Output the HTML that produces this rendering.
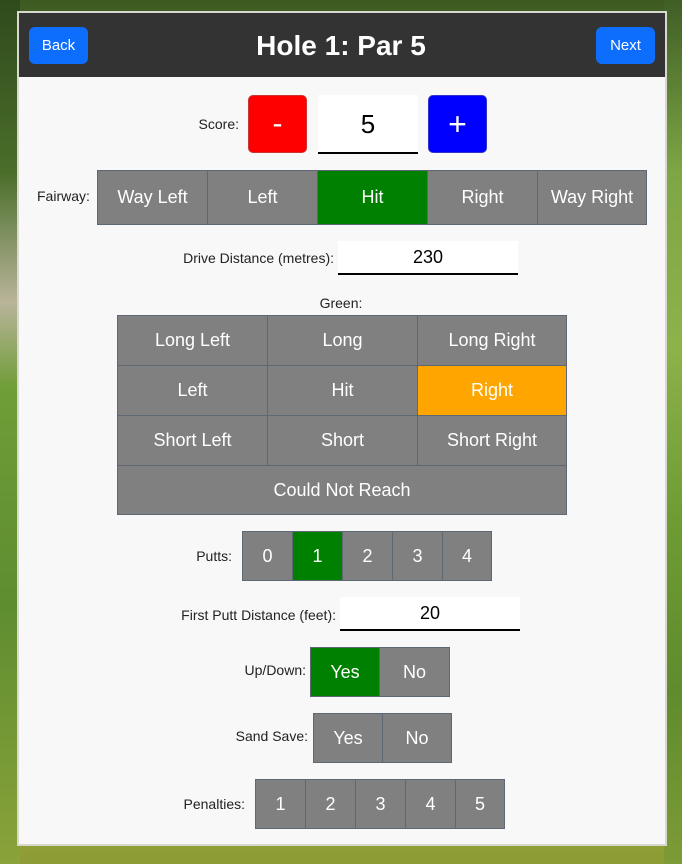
<!DOCTYPE html>
<html><head><meta charset="utf-8"><style>
*{box-sizing:border-box;margin:0;padding:0}
body{width:682px;height:864px;overflow:hidden;position:relative;font-family:"Liberation Sans",sans-serif;
background:linear-gradient(180deg,#3d5a22 0%,#55802e 15%,#6f9a38 30%,#7aa53c 50%,#87a83a 70%,#93a537 90%,#8e9c35 100%);}
.bgl{position:absolute;left:0;top:0;width:20px;height:864px;background:linear-gradient(180deg,#2f4a1c 0%,#4a6e2a 20%,#b9b49a 35%,#6f9d37 45%,#5e8d30 70%,#8aa33a 100%)}
.bgr{position:absolute;right:0;top:0;width:18px;height:864px;background:linear-gradient(180deg,#3e5e25 0%,#7ea645 20%,#8db24a 40%,#6e9c33 60%,#5f8c2d 80%,#7d9b37 100%)}
.card{position:absolute;left:17px;top:11px;width:650px;height:835px;background:#f8f8f8;border:2px solid #d8d8d0}
.hdr{position:absolute;left:19px;top:13px;width:646px;height:64px;background:#333}
.nb{position:absolute;top:27px;height:37px;background:#0d6efd;color:#fff;border-radius:6px;font-size:15px;line-height:37px;text-align:center}
.title{position:absolute;left:0;width:682px;top:27px;text-align:center;color:#fff;font-size:28px;font-weight:bold;line-height:38px}
.lbl{position:absolute;font-size:14px;color:#222;text-align:right;white-space:nowrap}
.b{position:absolute;background:#808080;color:#fff;font-size:18px;text-align:center;border:1px solid #5d6874}
.g{background:#008000}
.o{background:#ffa500}
.inp{position:absolute;background:#fff;border-bottom:2px solid #000;text-align:center;color:#000}
</style></head><body>
<div class="bgl"></div><div class="bgr"></div>
<div class="card"></div>
<div class="hdr"></div>
<div class="nb" style="left:29px;width:59px">Back</div>
<div class="nb" style="left:596px;width:59px">Next</div>
<div class="title">Hole 1: Par 5</div>

<div class="lbl" style="right:443px;top:116px">Score:</div>
<div class="b" style="left:248px;top:95px;width:59px;height:58px;background:#f00;border-color:#c33;border-radius:5px;font-size:30px;line-height:56px">-</div>
<div class="inp" style="left:318px;top:95px;width:100px;height:59px;font-size:26px;line-height:58px">5</div>
<div class="b" style="left:428px;top:95px;width:59px;height:58px;background:#00f;border-color:#33c;border-radius:5px;font-size:32px;line-height:56px">+</div>

<div class="lbl" style="left:37px;top:188px">Fairway:</div>
<div class="b" style="left:97px;top:170px;width:111px;height:55px;line-height:53px">Way Left</div>
<div class="b" style="left:207px;top:170px;width:111px;height:55px;line-height:53px">Left</div>
<div class="b g" style="left:317px;top:170px;width:111px;height:55px;line-height:53px">Hit</div>
<div class="b" style="left:427px;top:170px;width:111px;height:55px;line-height:53px">Right</div>
<div class="b" style="left:537px;top:170px;width:110px;height:55px;line-height:53px">Way Right</div>

<div class="lbl" style="right:348px;top:250px">Drive Distance (metres):</div>
<div class="inp" style="left:338px;top:241px;width:180px;height:34px;font-size:18px;line-height:33px">230</div>

<div class="lbl" style="left:0;width:682px;text-align:center;top:295px">Green:</div>
<div class="b" style="left:117px;top:315px;width:151px;height:51px;line-height:49px">Long Left</div>
<div class="b" style="left:267px;top:315px;width:151px;height:51px;line-height:49px">Long</div>
<div class="b" style="left:417px;top:315px;width:150px;height:51px;line-height:49px">Long Right</div>
<div class="b" style="left:117px;top:365px;width:151px;height:51px;line-height:49px">Left</div>
<div class="b" style="left:267px;top:365px;width:151px;height:51px;line-height:49px">Hit</div>
<div class="b o" style="left:417px;top:365px;width:150px;height:51px;line-height:49px">Right</div>
<div class="b" style="left:117px;top:415px;width:151px;height:51px;line-height:49px">Short Left</div>
<div class="b" style="left:267px;top:415px;width:151px;height:51px;line-height:49px">Short</div>
<div class="b" style="left:417px;top:415px;width:150px;height:51px;line-height:49px">Short Right</div>
<div class="b" style="left:117px;top:465px;width:450px;height:50px;line-height:48px">Could Not Reach</div>

<div class="lbl" style="right:450px;top:548px">Putts:</div>
<div class="b" style="left:242px;top:531px;width:51px;height:50px;line-height:48px">0</div>
<div class="b g" style="left:292px;top:531px;width:51px;height:50px;line-height:48px">1</div>
<div class="b" style="left:342px;top:531px;width:51px;height:50px;line-height:48px">2</div>
<div class="b" style="left:392px;top:531px;width:51px;height:50px;line-height:48px">3</div>
<div class="b" style="left:442px;top:531px;width:50px;height:50px;line-height:48px">4</div>

<div class="lbl" style="right:346px;top:607px">First Putt Distance (feet):</div>
<div class="inp" style="left:340px;top:597px;width:180px;height:34px;font-size:18px;line-height:33px">20</div>

<div class="lbl" style="right:376px;top:662px">Up/Down:</div>
<div class="b g" style="left:310px;top:647px;width:70px;height:50px;line-height:48px">Yes</div>
<div class="b" style="left:379px;top:647px;width:71px;height:50px;line-height:48px">No</div>

<div class="lbl" style="right:374px;top:728px">Sand Save:</div>
<div class="b" style="left:313px;top:713px;width:70px;height:50px;line-height:48px">Yes</div>
<div class="b" style="left:382px;top:713px;width:70px;height:50px;line-height:48px">No</div>

<div class="lbl" style="right:437px;top:796px">Penalties:</div>
<div class="b" style="left:255px;top:779px;width:51px;height:50px;line-height:48px">1</div>
<div class="b" style="left:305px;top:779px;width:51px;height:50px;line-height:48px">2</div>
<div class="b" style="left:355px;top:779px;width:51px;height:50px;line-height:48px">3</div>
<div class="b" style="left:405px;top:779px;width:51px;height:50px;line-height:48px">4</div>
<div class="b" style="left:455px;top:779px;width:50px;height:50px;line-height:48px">5</div>
</body></html>
